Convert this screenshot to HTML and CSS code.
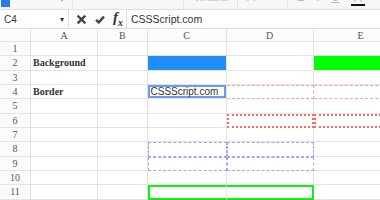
FILE: index.html
```html
<!DOCTYPE html>
<html>
  <head>
    <link rel="stylesheet" href="styles.css">
  </head>
  <body>
    <div class="app">
      <div class="toolbar">
        <div class="tb-group g1">
          <span class="swatch"></span>
          <span class="tb-icon caret">&#9662;</span>
        </div>
        <div class="tb-group g2">
          <span class="tb-icon">&#8630;</span>
          <span class="tb-icon">&#8631;</span>
          <span class="tb-icon">&#8676;</span>
          <span class="tb-icon">&#8677;</span>
          <span class="tb-icon small">abc</span>
        </div>
        <div class="tb-group g3">
          <span class="tb-text">Verdana</span>
        </div>
        <div class="tb-group g4">
          <span class="tb-icon">A</span>
          <span class="tb-icon caret">&#9662;</span>
        </div>
        <div class="tb-group g5">
          <span class="tb-icon bold">B</span>
          <span class="tb-icon italic">I</span>
          <span class="tb-icon under">U</span>
          <span class="tb-icon color">A<span class="color-bar"></span></span>
        </div>
      </div>

      <div class="formula-bar">
        <div class="name-box">
          <span>C4</span>
          <span class="name-caret">&#9662;</span>
        </div>
        <div class="formula-actions">
          <svg class="fa-icon" width="9" height="9" viewBox="0 0 9 9">
            <path d="M1.5 1.5 L7.5 7.5 M7.5 1.5 L1.5 7.5" stroke="#444" stroke-width="2.4" stroke-linecap="square"/>
          </svg>
          <svg class="fa-icon" width="10" height="9" viewBox="0 0 10 9">
            <path d="M1 4.8 L3.8 7.4 L9 1.6" fill="none" stroke="#444" stroke-width="2.4"/>
          </svg>
          <span class="fa-fx">f<sub>x</sub></span>
        </div>
        <div class="formula-input">CSSScript.com</div>
      </div>

      <div class="sheet">
        <div class="corner"></div>
        <div class="ch">A</div>
        <div class="ch">B</div>
        <div class="ch">C</div>
        <div class="ch">D</div>
        <div class="ch">E</div>

        <div class="rh">1</div>
        <div class="cell"></div><div class="cell"></div><div class="cell"></div><div class="cell"></div><div class="cell"></div>

        <div class="rh">2</div>
        <div class="cell label">Background</div><div class="cell"></div><div class="cell fill-blue"></div><div class="cell"></div><div class="cell fill-green"></div>

        <div class="rh">3</div>
        <div class="cell"></div><div class="cell"></div><div class="cell"></div><div class="cell"></div><div class="cell"></div>

        <div class="rh">4</div>
        <div class="cell label">Border</div><div class="cell"></div>
        <div class="cell editing"><div class="editor">CSSScript.com</div></div>
        <div class="cell red-thin"></div><div class="cell red-thin"></div>

        <div class="rh">5</div>
        <div class="cell"></div><div class="cell"></div><div class="cell"></div><div class="cell"></div><div class="cell"></div>

        <div class="rh">6</div>
        <div class="cell"></div><div class="cell"></div><div class="cell"></div><div class="cell red-thick"></div><div class="cell red-thick"></div>

        <div class="rh">7</div>
        <div class="cell"></div><div class="cell"></div><div class="cell"></div><div class="cell"></div><div class="cell"></div>

        <div class="rh">8</div>
        <div class="cell"></div><div class="cell"></div><div class="cell blue-dash"></div><div class="cell blue-dash"></div><div class="cell"></div>

        <div class="rh">9</div>
        <div class="cell"></div><div class="cell"></div><div class="cell blue-dash"></div><div class="cell blue-dash"></div><div class="cell"></div>

        <div class="rh">10</div>
        <div class="cell"></div><div class="cell"></div><div class="cell"></div><div class="cell"></div><div class="cell"></div>

        <div class="rh">11</div>
        <div class="cell"></div><div class="cell"></div><div class="cell green-left"></div><div class="cell green-right"></div><div class="cell"></div>
      </div>
    </div>
  </body>
</html>
```

FILE: styles.css
```css
* {
  box-sizing: border-box;
  margin: 0;
  padding: 0;
}

body {
  background: white;
  font-family: "Liberation Sans", Arial, sans-serif;
  color: #333;
}

.app {
  width: 380px;
  height: 200px;
  overflow: hidden;
}

/* toolbar, mostly scrolled out of view */
.toolbar {
  display: flex;
  align-items: flex-end;
  height: 10px;
  overflow: hidden;
  background: #f7f7f7;
  border-bottom: solid 1px #dedede;
}

.tb-group {
  display: flex;
  align-items: flex-end;
  flex-shrink: 0;
  height: 24px;
  padding-bottom: 5px;
  border-right: solid 1px #e4e4e4;
}

.g1 { width: 73px; justify-content: space-between; padding: 0 8px 0 1px; }
.g2 { width: 111px; gap: 8px; padding-left: 12px; }
.g3 { width: 54px; padding-left: 10px; }
.g4 { width: 50px; justify-content: space-between; padding-left: 9px; padding-right: 6px; }
.g5 { width: 100px; gap: 11px; padding-left: 9px; border-right: none; }

.swatch {
  display: block;
  width: 9px;
  height: 20px;
  margin-bottom: 2px;
  background: #2a7be6;
}

.tb-icon {
  font-size: 12px;
  line-height: 14px;
  color: #bdbdbd;
}

.tb-icon.small {
  font-size: 9px;
}

.g1 .caret {
  font-size: 8px;
  margin-bottom: 2px;
  color: #666;
}

.tb-icon.caret {
  font-size: 8px;
  color: #aaa;
}

.tb-icon.bold { font-weight: bold; }
.tb-icon.italic { font-style: italic; }
.tb-icon.under { text-decoration: underline; }

.tb-icon.color {
  display: flex;
  flex-direction: column;
  align-items: center;
  margin-bottom: -2px;
}

.color-bar {
  display: block;
  width: 14px;
  height: 2px;
  margin-top: -1px;
  background: #111;
}

.tb-text {
  font-size: 9px;
  line-height: 12px;
  color: #c4c4c4;
}

/* formula bar */
.formula-bar {
  display: flex;
  height: 19px;
  border-bottom: solid 1px #dcdcdc;
  background: white;
}

.name-box {
  display: flex;
  align-items: center;
  justify-content: space-between;
  width: 69px;
  padding: 0 4px;
  font-size: 10px;
  border-right: solid 1px #e0e0e0;
}

.name-caret {
  font-size: 8px;
  color: #333;
}

.formula-actions {
  display: flex;
  align-items: center;
  gap: 9px;
  width: 58px;
  padding-left: 8px;
  border-right: solid 1px #e0e0e0;
}

.fa-fx {
  font-family: "Liberation Serif", serif;
  font-style: italic;
  font-size: 15px;
  font-weight: bold;
  line-height: 1;
  margin-left: -1px;
  color: #333;
}

.fa-fx sub {
  font-size: 10px;
}

.formula-input {
  display: flex;
  align-items: center;
  padding-left: 4px;
  font-size: 10.5px;
  color: #333;
}

/* sheet grid */
.sheet {
  display: grid;
  grid-template-columns: 31px 67px 49.5px 79px 87px 95px;
  grid-template-rows: 13px repeat(11, 14.33px);
  font-family: "Liberation Serif", "Times New Roman", serif;
  font-size: 10px;
}

.sheet > div {
  border-right: solid 1px #e3e3e3;
  border-bottom: solid 1px #e3e3e3;
  overflow: hidden;
}

.corner, .ch, .rh {
  background: #fbfbfb;
  color: #555;
}

.ch, .rh {
  display: flex;
  align-items: center;
  justify-content: center;
}

.cell {
  display: flex;
  align-items: center;
  padding-left: 2px;
  background: white;
}

.cell.editing {
  padding-left: 0;
}

.cell.label {
  font-weight: bold;
  color: #333;
}

.fill-blue { background: #1f8ff7; }
.fill-green { background: #00ff00; }

.sheet > .red-thin {
  border-top: dashed 1px #f9a0a0;
  border-bottom: dashed 1px #f9a0a0;
  border-right: dashed 1px #f9a0a0;
}

.sheet > .red-thick {
  border: dotted 2px #f66;
}

.sheet > .blue-dash {
  border: dashed 1px #a4a4f5;
}

.sheet > .green-left {
  border: solid 2px #11f011;
  border-right: solid 1px #e3e3e3;
}

.sheet > .green-right {
  border: solid 2px #11f011;
  border-left: none;
}

.editor {
  width: 100%;
  height: 13px;
  padding-left: 1px;
  border: solid 2px #6d9af0;
  font-family: "Liberation Sans", Arial, sans-serif;
  font-size: 10px;
  line-height: 9px;
  color: #333;
  background: white;
}
```
